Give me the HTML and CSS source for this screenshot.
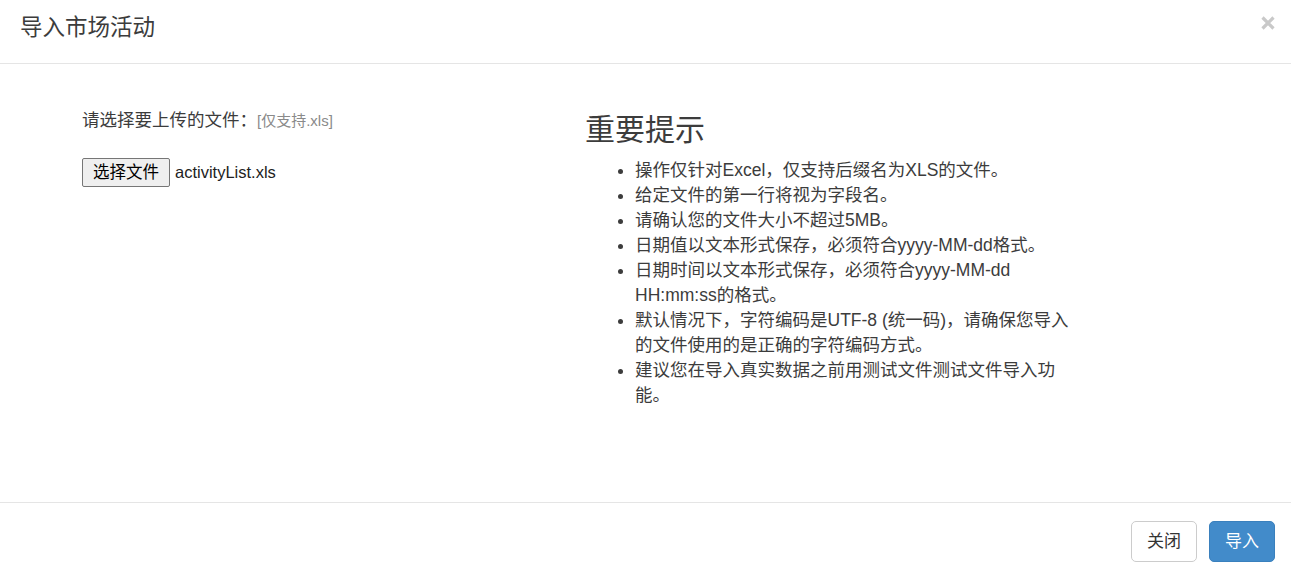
FILE: index.html
```html
<!DOCTYPE html>
<html lang="zh">
<head>
<meta charset="utf-8">
<title>导入市场活动</title>
<link rel="stylesheet" href="styles.css">
</head>
<body>
<div class="modal">
  <div class="modal-header">
    <h4 class="modal-title">导入市场活动</h4>
    <button class="close" type="button" aria-label="Close">
      <svg width="14" height="14" viewBox="0 0 14 14"><path d="M1.5 1.5 L12.5 12.5 M12.5 1.5 L1.5 12.5" stroke="#c9c9c9" stroke-width="3.2" stroke-linecap="butt"/></svg>
    </button>
  </div>
  <div class="modal-body">
    <div class="col-left">
      <div class="upload-label">请选择要上传的文件：<small class="hint">[仅支持.xls]</small></div>
      <div class="file-row">
        <span class="file-btn">选择文件</span><span class="file-name">activityList.xls</span>
      </div>
    </div>
    <div class="col-right">
      <h3 class="tips-title">重要提示</h3>
      <ul class="tips">
        <li>操作仅针对Excel，仅支持后缀名为XLS的文件。</li>
        <li>给定文件的第一行将视为字段名。</li>
        <li>请确认您的文件大小不超过5MB。</li>
        <li>日期值以文本形式保存，必须符合yyyy-MM-dd格式。</li>
        <li>日期时间以文本形式保存，必须符合yyyy-MM-dd HH:mm:ss的格式。</li>
        <li>默认情况下，字符编码是UTF-8 (统一码)，请确保您导入的文件使用的是正确的字符编码方式。</li>
        <li>建议您在导入真实数据之前用测试文件测试文件导入功能。</li>
      </ul>
    </div>
  </div>
  <div class="modal-footer">
    <button class="btn btn-default" type="button">关闭</button>
    <button class="btn btn-primary" type="button">导入</button>
  </div>
</div>
</body>
</html>
```

FILE: styles.css
```css
* { box-sizing: border-box; }
html, body {
  margin: 0;
  padding: 0;
  height: 573px;
  background: #fff;
}
body {
  font-family: "Liberation Sans", "Noto Sans CJK SC", sans-serif;
  font-size: 17.5px;
  line-height: 25px;
  color: #3c3c3c;
  overflow: hidden;
}
.modal {
  display: flex;
  flex-direction: column;
  height: 573px;
}
.modal-header {
  display: flex;
  justify-content: space-between;
  align-items: flex-start;
  height: 64px;
  padding: 12px 16px 0 20px;
  border-bottom: 1px solid #e5e5e5;
}
.modal-title {
  margin: 0;
  font-size: 22.5px;
  font-weight: normal;
  line-height: 32px;
  color: #3c3c3c;
}
.close {
  margin: 4px 0 0 0;
  padding: 0;
  border: 0;
  background: transparent;
  width: 14px;
  height: 14px;
  line-height: 0;
  cursor: pointer;
}
.modal-body {
  flex: 1;
  display: flex;
  padding-left: 82px;
}
.col-left {
  width: 503px;
  padding-top: 44px;
}
.upload-label {
  font-size: 17.5px;
  line-height: 25px;
}
.hint {
  font-size: 15px;
  color: #8a8a8a;
}
.file-row {
  display: flex;
  align-items: center;
  margin-top: 25px;
}
.file-btn {
  display: inline-block;
  height: 29px;
  line-height: 27px;
  padding: 0 10px;
  font-size: 16.5px;
  color: #000;
  background: #efefef;
  border: 1px solid #767676;
  border-radius: 2px;
}
.file-name {
  margin-left: 5px;
  font-size: 16.5px;
  color: #222;
}
.col-right {
  width: 486px;
  padding-top: 49px;
}
.tips-title {
  margin: 0 0 12px 0;
  font-size: 30px;
  font-weight: normal;
  line-height: 33px;
  color: #3c3c3c;
}
.tips {
  margin: 0;
  padding-left: 50px;
}
.tips li {
  line-height: 25px;
}
.modal-footer {
  display: flex;
  justify-content: flex-end;
  gap: 12px;
  padding: 18px 16px 11px;
  border-top: 1px solid #e5e5e5;
}
.btn {
  font-family: "Liberation Sans", "Noto Sans CJK SC", sans-serif;
  font-size: 17px;
  line-height: 23px;
  height: 41px;
  width: 66px;
  padding: 8px 0;
  border-radius: 5px;
  border: 1px solid #ccc;
  cursor: pointer;
}
.btn-default {
  background: #fff;
  color: #333;
}
.btn-primary {
  background: #428bca;
  border-color: #3a80bd;
  color: #fff;
}
```
